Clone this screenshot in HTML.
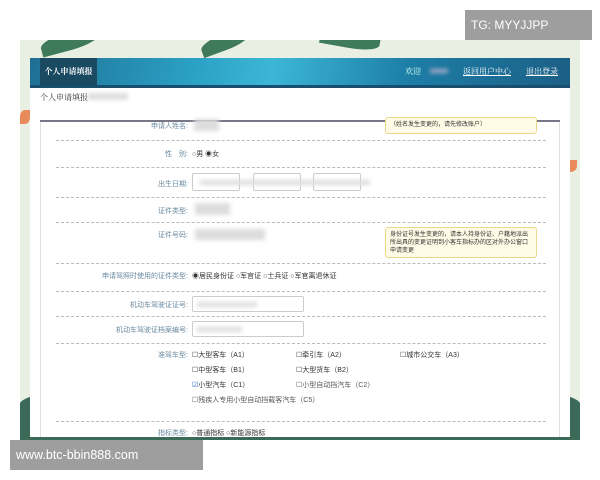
<!DOCTYPE html>
<html><head><meta charset="utf-8"><style>
*{margin:0;padding:0;box-sizing:border-box}
html,body{width:600px;height:480px;overflow:hidden}
body{background:#fff;position:relative;font-family:"Liberation Sans","Noto Sans CJK SC",sans-serif}
.bg{position:absolute;left:20px;top:40px;width:560px;height:400px;background:#e9efe3;overflow:hidden}
.leaf{position:absolute;border-radius:50% 0;background:#3f7a5a}
.hdr{position:absolute;left:30px;top:58px;width:540px;height:30px;background:linear-gradient(100deg,#1f6f93 0%,#2aa0c4 30%,#3cb6d6 45%,#1d7ea7 70%,#1c5f85 100%);border-bottom:3px solid #1a4e6e}
.tab{position:absolute;left:10px;top:0;width:57px;height:27px;background:#1a4a62;color:#fff;font-size:8px;font-weight:bold;line-height:27px;text-align:center;font-family:"Liberation Serif","Noto Serif CJK SC",serif}
.hr{position:absolute;top:8px;font-size:8px;color:#fff;font-family:"Liberation Serif","Noto Serif CJK SC",serif}
.panel{position:absolute;left:30px;top:88px;width:540px;height:349px;background:#fff;overflow:hidden}
.ttl{position:absolute;left:40px;top:92px;font-size:8px;color:#333;font-family:"Liberation Serif","Noto Serif CJK SC",serif}
.tline{position:absolute;left:40px;top:120px;width:520px;height:2px;background:#778}
.box{position:absolute;left:10px;top:33px;width:520px;height:316px;border-left:1px solid #e0e0e0;border-right:1px solid #e0e0e0}
.l{position:absolute;font-size:7px;color:#6a8aa0;text-align:right;width:140px;left:48px}
.v{position:absolute;font-size:7px;color:#333;left:192px}
.d{position:absolute;left:56px;width:490px;border-top:1px dashed #bbb}
.blur{position:absolute;background:#ddd;filter:blur(2px)}
.tip{position:absolute;background:#fffbe6;border:1px solid #e8d98a;border-radius:3px;font-size:6px;color:#333;padding:3px 4px;line-height:8px}
.inp{position:absolute;border:1px solid #ccc;border-radius:2px;background:#fff}
.ov{position:absolute;font-size:12px;color:#fff;background:#9e9e9e;padding:0 6px;z-index:5}
.c{position:absolute;left:-30px;top:-88px;width:600px;height:437px}
</style></head><body>
<div class="bg">
<div class="leaf" style="left:20px;top:-8px;width:60px;height:18px;transform:rotate(-15deg)"></div>
<div class="leaf" style="left:180px;top:-6px;width:50px;height:16px;transform:rotate(-20deg)"></div>
<div class="leaf" style="left:300px;top:-8px;width:60px;height:16px;transform:rotate(10deg)"></div>
<div class="leaf" style="left:0;top:340px;width:560px;height:60px;background:#3b6b58;border-radius:40% 40% 0 0"></div>
<div class="leaf" style="left:543px;top:120px;width:14px;height:12px;background:#e98a5a"></div>
<div class="leaf" style="left:0;top:70px;width:10px;height:14px;background:#e98a5a"></div>
</div>
<div class="hdr"><div class="tab">个人申请填报</div>
<span class="hr" style="left:375px;color:#cfe">欢迎</span>
<span class="blur" style="left:400px;top:11px;width:18px;height:4px;background:#aac"></span>
<span class="hr" style="left:433px;text-decoration:underline">返回用户中心</span>
<span class="hr" style="left:496px;text-decoration:underline">退出登录</span></div>
<div class="panel"><div class="box"></div><div class="c">
<div class="ttl">个人申请填报</div>
<div class="blur" style="left:88px;top:93px;width:40px;height:7px"></div>
<div class="tline"></div>
<div class="l" style="top:121px">申请人姓名:</div><div class="blur" style="left:194px;top:119px;width:25px;height:12px"></div>
<div class="tip" style="left:385px;top:117px;width:152px;height:17px">（姓名发生变更的，请先修改账户）</div>
<div class="d" style="top:140px"></div>
<div class="l" style="top:149px">性　别:</div><div class="v" style="top:149px">○男 ◉女</div>
<div class="d" style="top:167px"></div>
<div class="l" style="top:179px">出生日期:</div>
<div class="inp" style="left:192px;top:173px;width:48px;height:18px"></div><div class="inp" style="left:253px;top:173px;width:48px;height:18px"></div><div class="inp" style="left:313px;top:173px;width:48px;height:18px"></div>
<div class="blur" style="left:200px;top:180px;width:170px;height:5px"></div>
<div class="d" style="top:197px"></div>
<div class="l" style="top:206px">证件类型:</div><div class="blur" style="left:195px;top:203px;width:35px;height:12px"></div>
<div class="d" style="top:222px"></div>
<div class="l" style="top:230px">证件号码:</div><div class="blur" style="left:195px;top:229px;width:70px;height:11px"></div>
<div class="tip" style="left:385px;top:227px;width:152px;height:31px">身份证号发生变更的，请本人持身份证、户籍地派出所出具的变更证明到小客车指标办的区对外办公窗口申请变更</div>
<div class="d" style="top:263px"></div>
<div class="l" style="top:271px">申请驾照时使用的证件类型:</div><div class="v" style="top:271px">◉居民身份证 ○军官证 ○士兵证 ○军官离退休证</div>
<div class="d" style="top:291px"></div>
<div class="l" style="top:300px">机动车驾驶证证号:</div><div class="inp" style="left:192px;top:296px;width:112px;height:16px"></div><div class="blur" style="left:197px;top:302px;width:60px;height:5px"></div>
<div class="d" style="top:316px"></div>
<div class="l" style="top:325px">机动车驾驶证档案编号:</div><div class="inp" style="left:192px;top:321px;width:112px;height:16px"></div><div class="blur" style="left:197px;top:327px;width:45px;height:5px"></div>
<div class="d" style="top:343px"></div>
<div class="l" style="top:350px">准驾车型:</div>
<div class="v" style="top:350px">☐大型客车（A1）</div><div class="v" style="top:350px;left:296px">☐牵引车（A2）</div><div class="v" style="top:350px;left:400px">☐城市公交车（A3）</div>
<div class="v" style="top:365px">☐中型客车（B1）</div><div class="v" style="top:365px;left:296px">☐大型货车（B2）</div>
<div class="v" style="top:380px"><span style="color:#2a6ad0">☑</span>小型汽车（C1）</div><div class="v" style="top:380px;left:296px;color:#555">☐小型自动挡汽车（C2）</div>
<div class="v" style="top:395px;color:#555">☐残疾人专用小型自动挡载客汽车（C5）</div>
<div class="d" style="top:421px"></div>
<div class="l" style="top:428px">指标类型:</div><div class="v" style="top:428px">○普通指标 ○新能源指标</div>
</div></div>
<div class="ov" style="left:465px;top:10px;height:30px;line-height:30px;width:127px">TG: MYYJJPP</div>
<div class="ov" style="left:10px;top:440px;height:30px;line-height:30px;width:193px;font-size:12.5px">www.btc-bbin888.com</div>
</body></html>
